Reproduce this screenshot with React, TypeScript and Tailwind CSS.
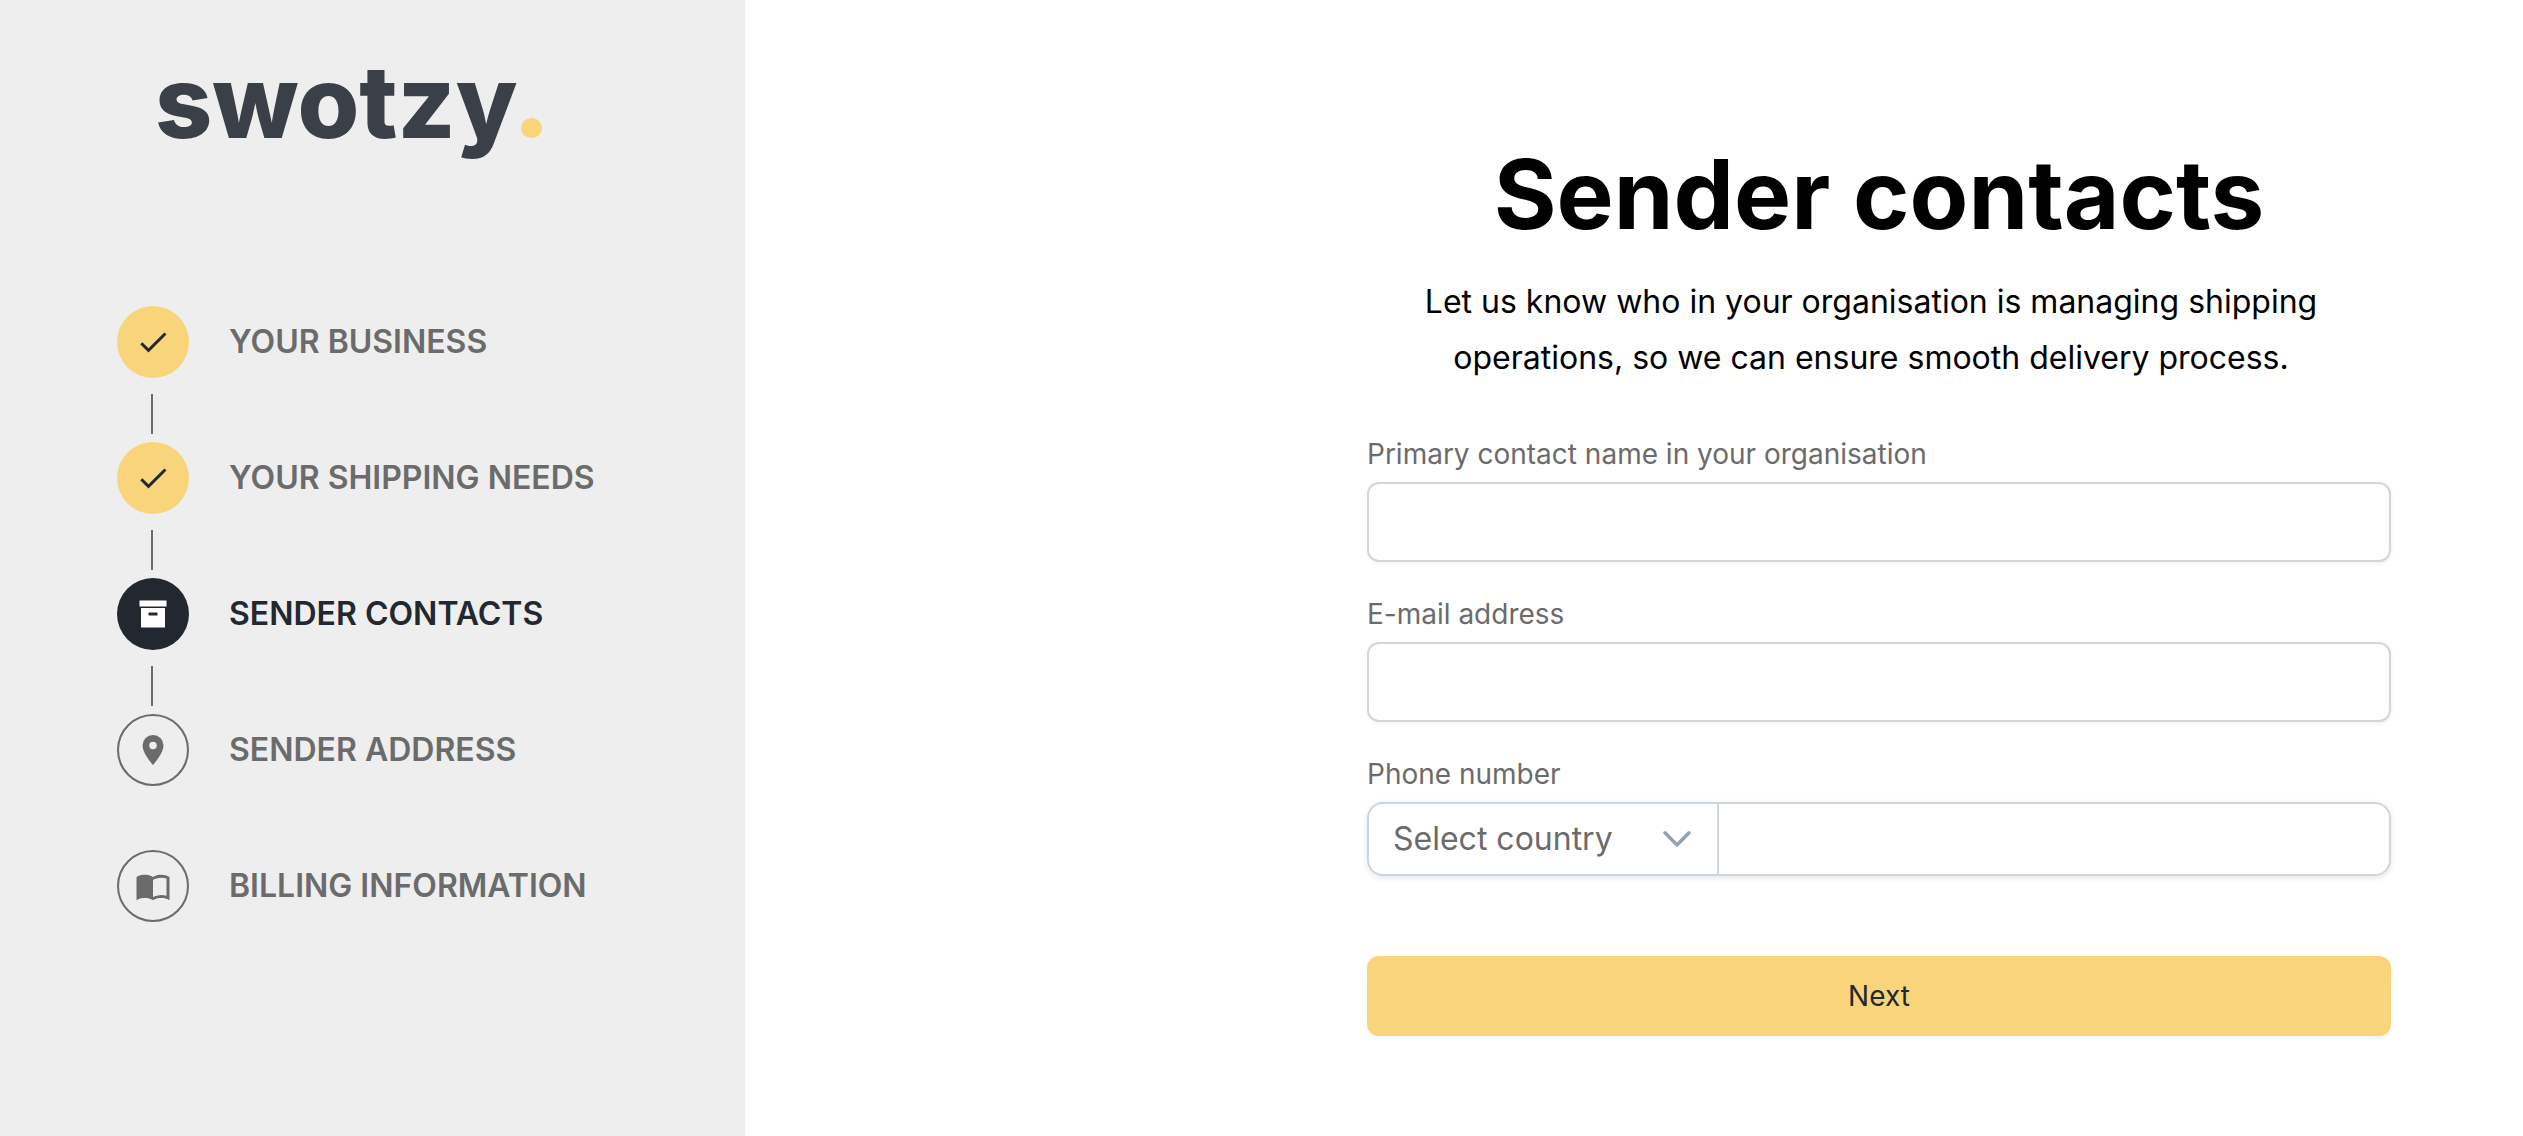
import type { ReactNode } from "react";

type StepState = "done" | "current" | "upcoming";

interface Step {
  label: string;
  state: StepState;
  icon: string;
}

const ICONS = {
  check: "M21 7L9 19L3.5 13.5L4.91 12.09L9 16.17L19.59 5.59L21 7Z",
  archive:
    "M3 3H21V7H3V3M4 8H20V21H4V8M9.5 11A.5.5 0 0 0 9 11.5V13H15V11.5A.5.5 0 0 0 14.5 11H9.5Z",
  marker:
    "M12 11.5A2.5 2.5 0 0 1 9.5 9A2.5 2.5 0 0 1 12 6.5A2.5 2.5 0 0 1 14.5 9A2.5 2.5 0 0 1 12 11.5M12 2A7 7 0 0 0 5 9C5 14.25 12 22 12 22C12 22 19 14.25 19 9A7 7 0 0 0 12 2Z",
  book: "M21 5C19.89 4.65 18.67 4.5 17.5 4.5C15.55 4.5 13.45 4.9 12 6C10.55 4.9 8.45 4.5 6.5 4.5C4.55 4.5 2.45 4.9 1 6V21.5C2.45 20.4 4.55 20 6.5 20C8.45 20 10.55 20.4 12 21.5C13.45 20.4 15.55 20 17.5 20C19.45 20 21.55 20.4 23 21.5V6C22.4 5.55 21.75 5.25 21 5M21 18.5C19.9 18.15 18.7 18 17.5 18C15.8 18 13.35 18.65 12 19.5V8C13.35 7.15 15.8 6.5 17.5 6.5C18.7 6.5 19.9 6.65 21 7V18.5Z",
};

const steps: Step[] = [
  { label: "YOUR BUSINESS", state: "done", icon: ICONS.check },
  { label: "YOUR SHIPPING NEEDS", state: "done", icon: ICONS.check },
  { label: "SENDER CONTACTS", state: "current", icon: ICONS.archive },
  { label: "SENDER ADDRESS", state: "upcoming", icon: ICONS.marker },
  { label: "BILLING INFORMATION", state: "upcoming", icon: ICONS.book },
];

const circleStyles: Record<StepState, string> = {
  done: "bg-[#f8d57a] text-[#232830]",
  current: "bg-[#232830] text-white",
  upcoming: "border-2 border-[#6b6b6b] text-[#6b6b6b]",
};

const Logo = () => (
  <div className="flex items-baseline gap-1 pl-[155px] text-[#3b3f47]">
    <span className="text-[100px] leading-[124px] font-extrabold">swotzy</span>
    <span className="w-[21px] h-5 rounded-full bg-[#f8d57a]"></span>
  </div>
);

const StepItem = ({ step, line }: { step: Step; line: boolean }) => (
  <li className="h-[136px]">
    <div className="flex items-center gap-10">
      <div
        className={`flex items-center justify-center size-18 rounded-full ${circleStyles[step.state]}`}
      >
        <svg viewBox="0 0 24 24" className="size-9" fill="currentColor">
          <path fillRule="evenodd" d={step.icon} />
        </svg>
      </div>
      <span
        className={`text-[32px] leading-10 font-semibold ${
          step.state === "current" ? "text-[#232830]" : "text-[#6b6b6b]"
        }`}
      >
        {step.label}
      </span>
    </div>
    {line && <div className="w-[2px] h-10 mt-4 ml-[34px] bg-[#6b6b6b]"></div>}
  </li>
);

const Field = ({
  id,
  label,
  children,
}: {
  id: string;
  label: string;
  children: ReactNode;
}) => (
  <div>
    <label htmlFor={id} className="block mb-2 text-[28px] leading-10 text-[#6b6b6b]">
      {label}
    </label>
    {children}
  </div>
);

const inputStyle =
  "block w-full h-20 px-6 text-[32px] bg-white border-2 border-gray-300 rounded-xl shadow-[0_2px_4px_rgba(0,0,0,0.05)] outline-none";

export default function App() {
  return (
    <div className="flex min-h-screen bg-white font-['Inter',sans-serif]">
      <aside className="w-[745px] shrink-0 pt-10 bg-[#eeeeee]">
        <Logo />
        <ol className="mt-[142px] pl-[117px]">
          {steps.map((step, i) => (
            <StepItem key={step.label} step={step} line={i < 3} />
          ))}
        </ol>
      </aside>

      <main className="flex-1 pl-[490px] pt-[146px]">
        <form className="max-w-[1024px] mx-auto">
          <h1 className="text-8xl leading-none font-bold text-center text-black">
            Sender contacts
          </h1>
          <p className="mt-8 pl-8 pr-12 text-[32px] leading-14 text-center text-black">
            Let us know who in your organisation is managing shipping
            operations, so we can ensure smooth delivery process.
          </p>

          <div className="flex flex-col gap-8 mt-12">
            <Field id="name" label="Primary contact name in your organisation">
              <input id="name" type="text" className={inputStyle} />
            </Field>
            <Field id="email" label="E-mail address">
              <input id="email" type="email" className={inputStyle} />
            </Field>
            <Field id="phone" label="Phone number">
              <div className="flex h-[74px] rounded-2xl shadow-[0_2px_6px_rgba(0,0,0,0.1)]">
                <div className="relative w-[350px]">
                  <select
                    aria-label="Select country"
                    className="w-full h-full pl-6 pr-20 text-[32px] text-[#6b6b6b] bg-white border-2 border-r-0 border-slate-300 rounded-l-2xl appearance-none outline-none"
                  >
                    <option>Select country</option>
                  </select>
                  <svg
                    viewBox="0 0 28 28"
                    className="absolute right-[26px] top-6 size-7 text-slate-400 pointer-events-none"
                    fill="none"
                    stroke="currentColor"
                    strokeWidth="3.4"
                    strokeLinecap="round"
                    strokeLinejoin="round"
                  >
                    <path d="M2 6.7L14 19L26 6.7" />
                  </svg>
                </div>
                <input
                  id="phone"
                  type="tel"
                  className="flex-1 px-6 text-[32px] bg-white border-2 border-gray-300 rounded-r-2xl outline-none"
                />
              </div>
            </Field>
          </div>

          <button
            type="submit"
            className="w-full h-20 mt-20 text-[28px] text-[#232830] bg-[#f8d57a] rounded-xl shadow-[0_2px_4px_rgba(0,0,0,0.05)]"
          >
            Next
          </button>
        </form>
      </main>
    </div>
  );
}
